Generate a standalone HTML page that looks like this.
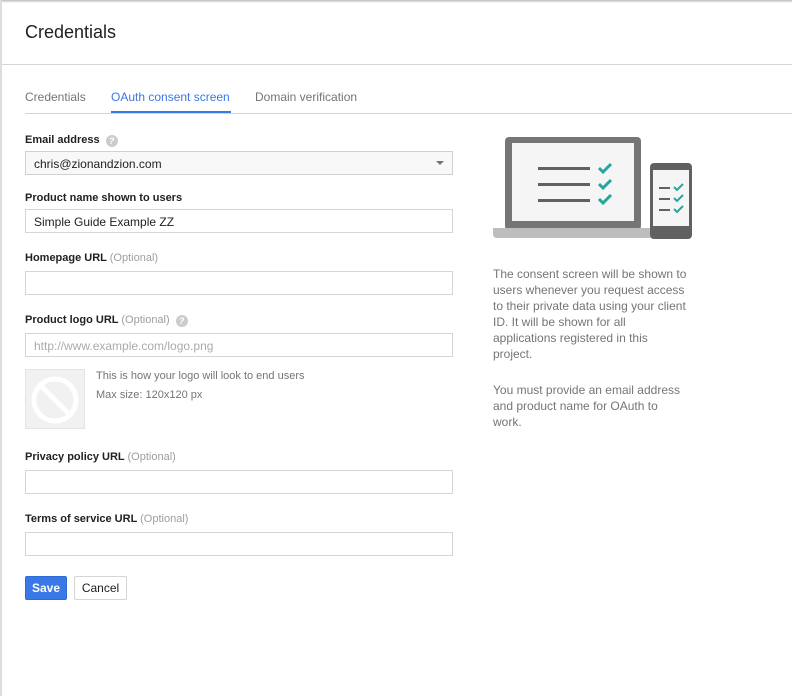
<!DOCTYPE html>
<html><head><meta charset="utf-8"><style>
*{box-sizing:border-box;margin:0;padding:0}
body{width:792px;height:696px;background:#fff;font-family:"Liberation Sans",Arial,sans-serif;position:relative;overflow:hidden;color:#212121}
.a{position:absolute}
.lbl{position:absolute;left:25px;font-size:11px;font-weight:bold;color:#212121}
.lbl span{font-weight:normal;color:#9e9e9e}
.inp{position:absolute;left:25px;width:428px;height:24px;border:1px solid #d5d5d5;font-size:12px;padding:5px 8px;color:#212121}
.q{display:inline-block;width:12px;height:12px;border-radius:50%;background:#ccc;color:#fff;font-size:9px;text-align:center;line-height:12px;margin-left:6px;vertical-align:-1px;font-weight:bold}
.rt{position:absolute;left:493px;white-space:nowrap;font-size:12px;line-height:16px;color:#757575}
</style></head><body>
<div class="a" style="left:0;top:0;width:792px;height:3px;background:linear-gradient(#bbb,#fff)"></div>
<div class="a" style="left:0;top:0;width:2px;height:696px;background:#ddd"></div>
<div class="a" style="left:25px;top:22px;font-size:18px;color:#212121">Credentials</div>
<div class="a" style="left:2px;top:64px;width:790px;height:1px;background:#d5d5d5"></div>
<div class="a" style="left:25px;top:90px;font-size:12px;color:#757575">Credentials</div>
<div class="a" style="left:111px;top:90px;font-size:12px;color:#3b78e7">OAuth consent screen</div>
<div class="a" style="left:255px;top:90px;font-size:12px;color:#757575">Domain verification</div>
<div class="a" style="left:25px;top:113px;width:767px;height:1px;background:#d5d5d5"></div>
<div class="a" style="left:111px;top:111px;width:120px;height:2px;background:#3b78e7"></div>

<div class="lbl" style="top:134px">Email address<i class="q">?</i></div>
<div class="inp" style="top:151px;background:#f8f8f8;border-color:#d0d0d0">chris@zionandzion.com</div>
<div class="a" style="left:436px;top:161px;width:0;height:0;border-left:4px solid transparent;border-right:4px solid transparent;border-top:4px solid #757575"></div>
<div class="lbl" style="top:192px">Product name shown to users</div>
<div class="inp" style="top:209px">Simple Guide Example ZZ</div>
<div class="lbl" style="top:252px">Homepage URL <span>(Optional)</span></div>
<div class="inp" style="top:271px"></div>
<div class="lbl" style="top:314px">Product logo URL <span>(Optional)</span><i class="q">?</i></div>
<div class="inp" style="top:333px;color:#aaa">http://www.example.com/logo.png</div>
<div class="a" style="left:25px;top:369px;width:60px;height:60px;background:#f1f1f1;border:1px solid #e4e4e4">
<svg width="58" height="58" viewBox="0 0 58 58"><circle cx="29" cy="30" r="21" fill="none" stroke="#fff" stroke-width="5"/><line x1="15" y1="16" x2="43" y2="44" stroke="#fff" stroke-width="5"/></svg></div>
<div class="a" style="left:96px;top:370px;font-size:11px;color:#757575">This is how your logo will look to end users</div>
<div class="a" style="left:96px;top:389px;font-size:11px;color:#757575">Max size: 120x120 px</div>
<div class="lbl" style="top:451px">Privacy policy URL <span>(Optional)</span></div>
<div class="inp" style="top:470px"></div>
<div class="lbl" style="top:513px">Terms of service URL <span>(Optional)</span></div>
<div class="inp" style="top:532px"></div>
<div class="a" style="left:25px;top:576px;width:42px;height:24px;background:#3b78e7;border:1px solid #2f6bd4;border-radius:2px;color:#fff;font-size:12px;font-weight:bold;text-align:center;line-height:22px">Save</div>
<div class="a" style="left:74px;top:576px;width:53px;height:24px;background:#fff;border:1px solid #d5d5d5;border-radius:2px;color:#212121;font-size:12px;text-align:center;line-height:22px">Cancel</div>

<svg class="a" style="left:0;top:0" width="792" height="260">
<rect x="505" y="137" width="136" height="93" rx="4" fill="#757575"/>
<rect x="512" y="143" width="122" height="78" fill="#f5f5f5"/>
<path d="M493 228H653V234Q653 238 649 238H497Q493 238 493 234Z" fill="#bdbdbd"/>
<g fill="#616161"><rect x="538" y="167" width="52" height="3"/><rect x="538" y="183" width="52" height="3"/><rect x="538" y="199" width="52" height="3"/></g>
<g fill="none" stroke="#26a69a" stroke-width="3"><path d="M599 168l4 4 8-8"/><path d="M599 184l4 4 8-8"/><path d="M599 199l4 4 8-8"/></g>
<rect x="650" y="163" width="42" height="76" rx="4" fill="#616161"/>
<rect x="653" y="170" width="36" height="56" fill="#f5f5f5"/>
<g fill="#616161"><rect x="659" y="187" width="11" height="2"/><rect x="659" y="198" width="11" height="2"/><rect x="659" y="209" width="11" height="2"/></g>
<g fill="none" stroke="#26a69a" stroke-width="2"><path d="M674 187l3 3 6-6"/><path d="M674 198l3 3 6-6"/><path d="M674 209l3 3 6-6"/></g>
</svg>
<div class="rt" style="top:266px">The consent screen will be shown to<br>users whenever you request access<br>to their private data using your client<br>ID. It will be shown for all<br>applications registered in this<br>project.</div>
<div class="rt" style="top:382px">You must provide an email address<br>and product name for OAuth to<br>work.</div>
</body></html>
